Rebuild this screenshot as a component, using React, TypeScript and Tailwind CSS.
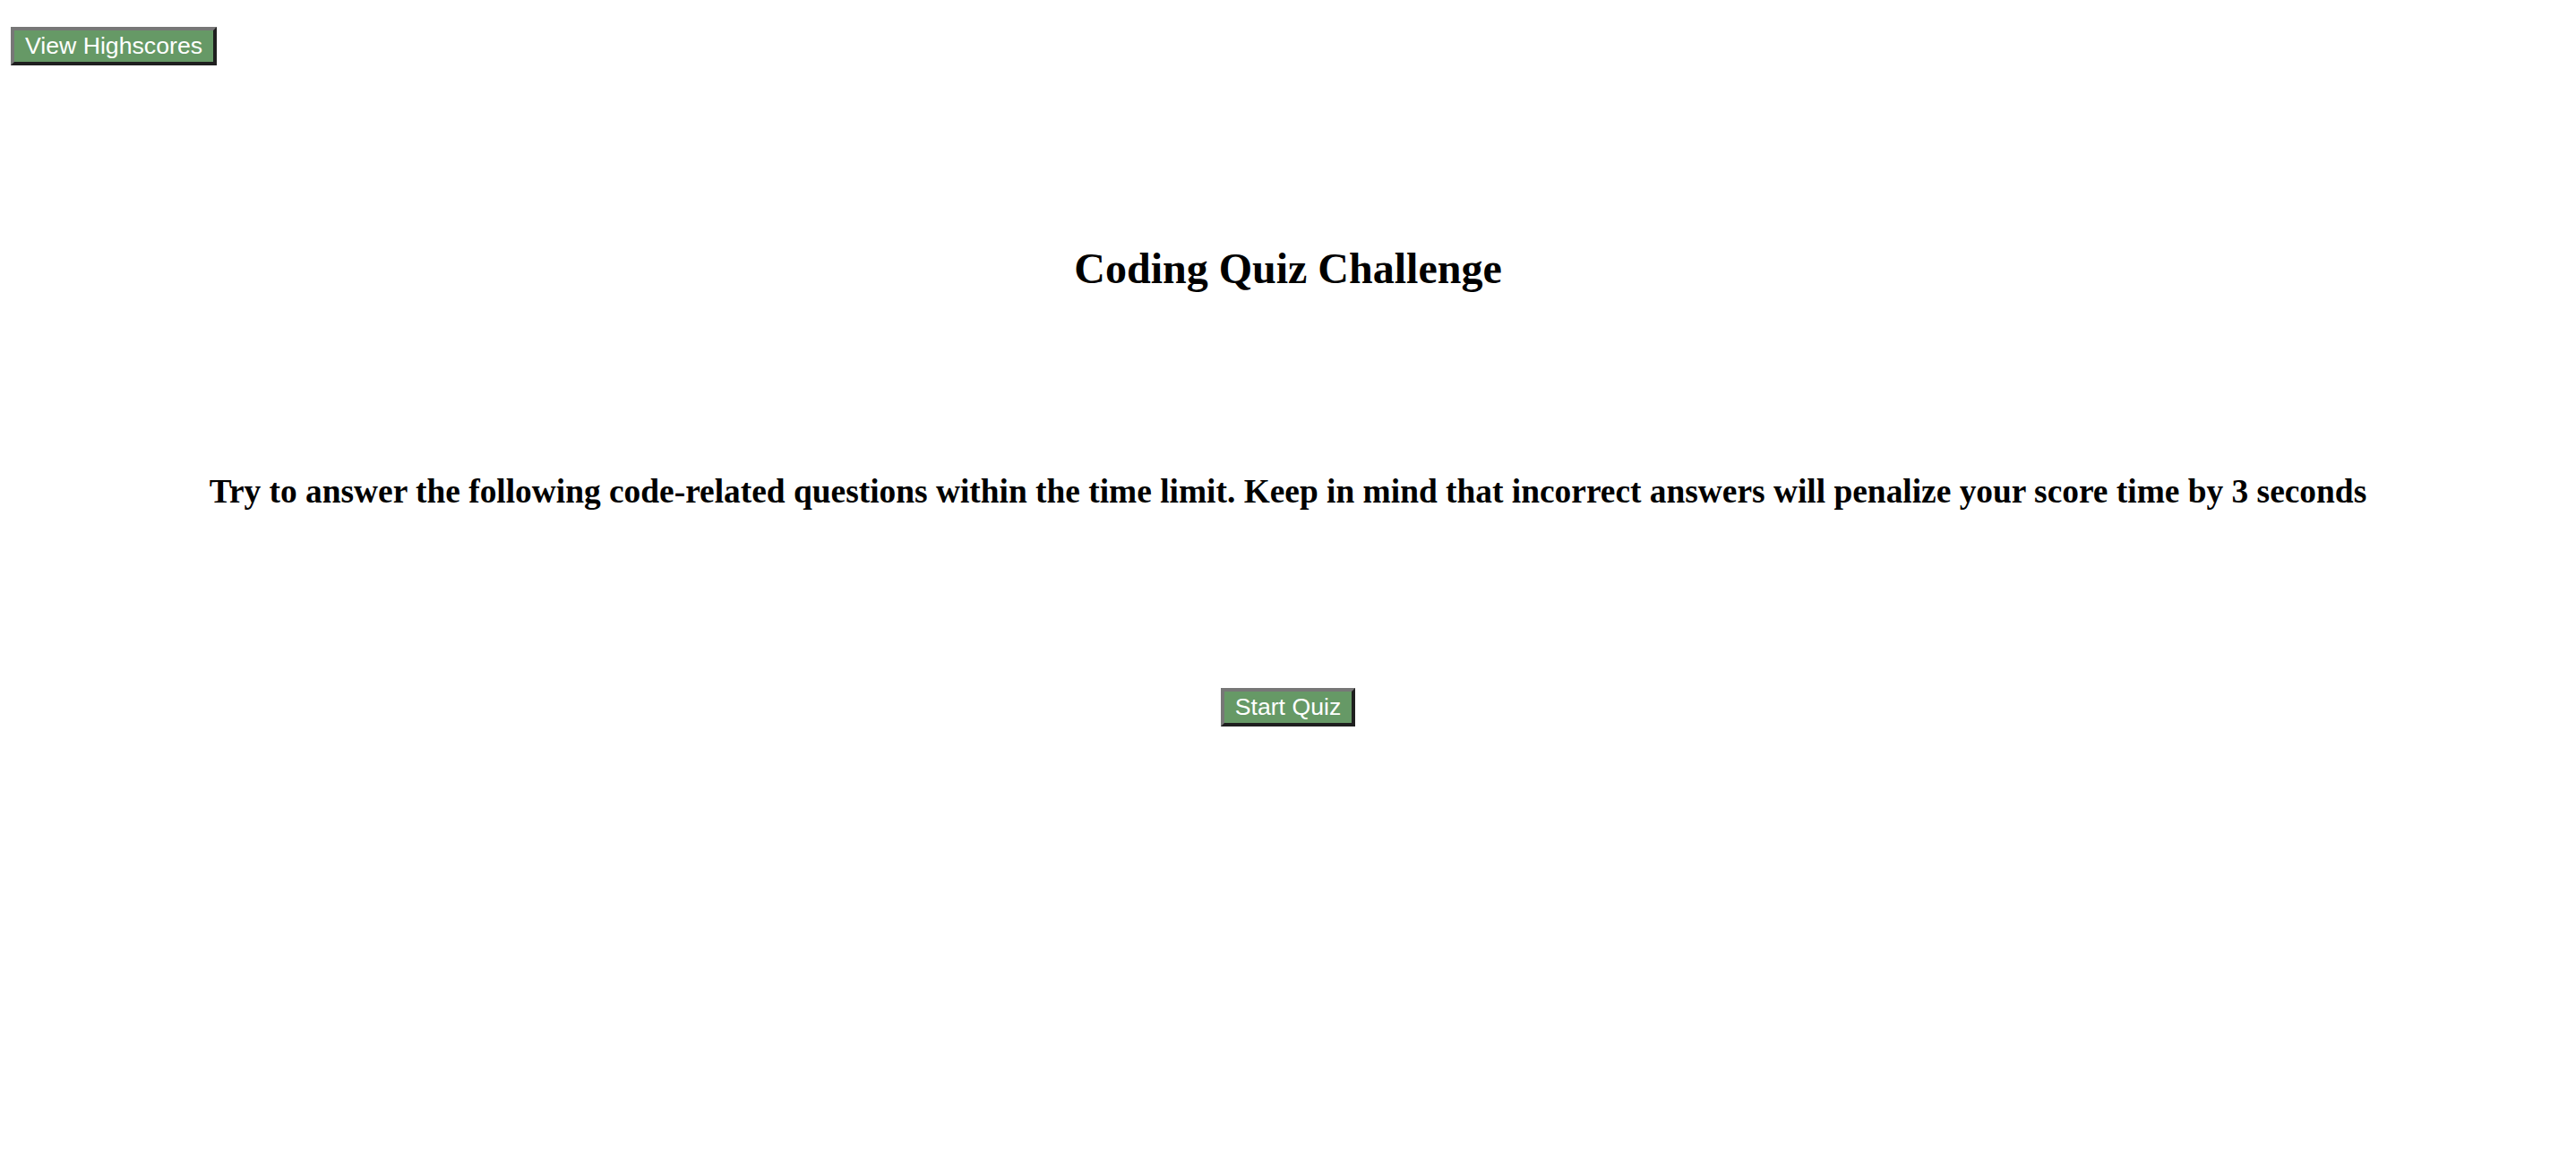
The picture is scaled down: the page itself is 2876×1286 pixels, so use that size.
export default function App() {
  const btn =
    "bg-[#669966] text-white font-['Liberation_Sans',Arial,sans-serif] text-[26.67px] leading-[31px] px-[12px] py-[2px] border-[4px] border-t-[#777777] border-l-[#777777] border-b-[#1f1f1f] border-r-[#1f1f1f]";

  return (
    <div className="min-h-screen bg-white text-black font-['Liberation_Serif','Times_New_Roman',serif]">
      <header className="pt-[30px] pl-[12px]">
        <button className={btn}>View Highscores</button>
      </header>

      <main className="flex flex-col items-center text-center">
        <h2 className="mt-[199px] text-[48px] leading-[55px] font-bold">Coding Quiz Challenge</h2>
        <h3 className="mt-[200px] text-[37.4px] leading-[43px] font-bold">
          Try to answer the following code-related questions within the time limit. Keep in mind that incorrect
          answers will penalize your score time by 3 seconds
        </h3>
        <button className={`${btn} mt-[198px]`}>Start Quiz</button>
      </main>
    </div>
  );
}
